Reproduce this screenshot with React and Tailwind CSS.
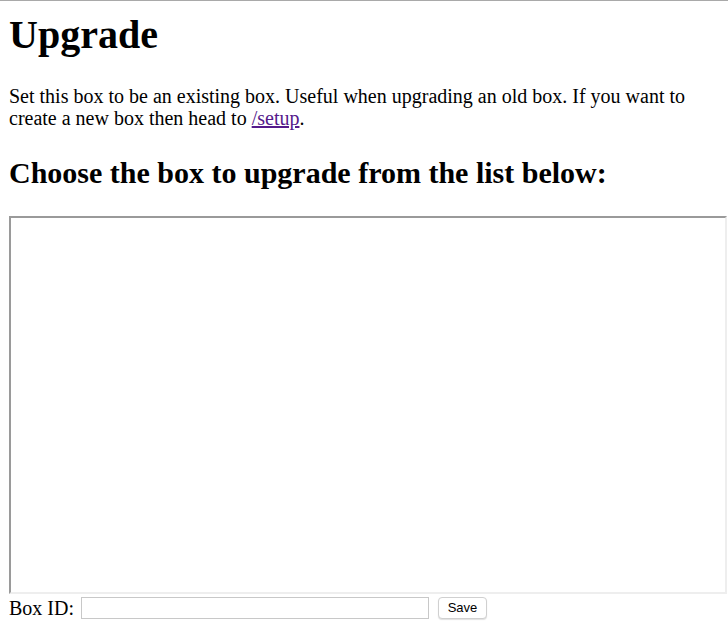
import React, { useState } from 'react';

const serif = { fontFamily: "'Liberation Serif', 'Times New Roman', serif" };

const App = () => {
  const [boxId, setBoxId] = useState('');

  return (
    <div className="min-h-screen bg-white text-black border-t border-[#a9a9a9]" style={serif}>
      <div className="px-[9px] text-[20px]">
        <h1 className="text-[40px] font-bold leading-[46px] pt-[11px]">Upgrade</h1>

        <p className="mt-[27px] leading-[22px] w-[700px]">
          Set this box to be an existing box. Useful when upgrading an old box. If you want to
          create a new box then head to{' '}
          <a href="/setup" className="text-[#551a8b] underline">/setup</a>.
        </p>

        <h2 className="mt-[27px] text-[30px] font-bold leading-[34px]">
          Choose the box to upgrade from the list below:
        </h2>

        {/* box list frame */}
        <div className="mt-[26px] w-[718px] h-[378px] border-2 border-t-[#9a9a9a] border-l-[#9a9a9a] border-r-[#eeeeee] border-b-[#eeeeee] bg-white" />

        <div className="flex items-center h-[27px] pt-[1px]">
          <label htmlFor="box-id" className="leading-[22px]">Box ID:</label>
          <input
            id="box-id"
            value={boxId}
            onChange={(e) => setBoxId(e.target.value)}
            className="ml-[7px] w-[348px] h-[22px] border border-[#c8c8c8] bg-white outline-none"
          />
          <button
            className="ml-[9px] w-[49px] h-[22px] rounded-[4px] border border-[#d0d0d0] bg-white text-[13px] shadow-[0_1px_1px_rgba(0,0,0,0.12)]"
            style={{ fontFamily: "'Liberation Sans', Arial, sans-serif" }}
          >
            Save
          </button>
        </div>
      </div>
    </div>
  );
};

export default App;
